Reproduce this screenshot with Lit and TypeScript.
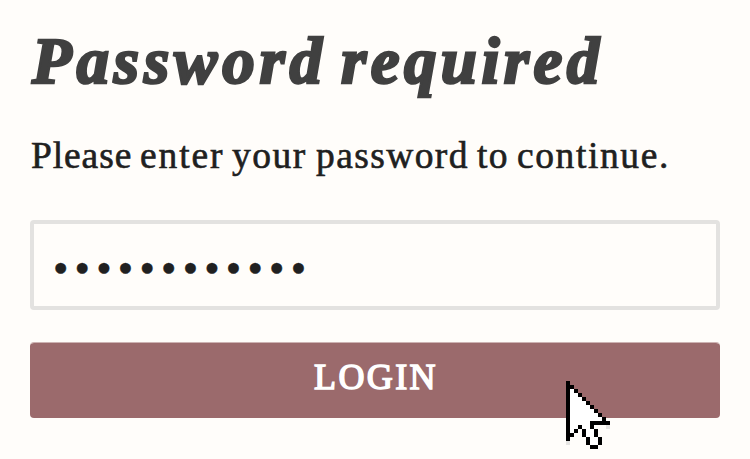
import { LitElement, html, css, svg } from "lit";
import { customElement } from "lit/decorators.js";
import { styleMap } from "lit/directives/style-map.js";

interface Word { text: string; advance: number; spacing: number; }

const TITLE: Word[] = [
  { text: "Password", advance: 309, spacing: 4.8 },
  { text: "required", advance: 270, spacing: 4.4 },
];

const MESSAGE: Word[] = [
  { text: "Please", advance: 109, spacing: 0.9 },
  { text: "enter", advance: 92, spacing: 1.9 },
  { text: "your", advance: 84, spacing: 1.5 },
  { text: "password", advance: 161, spacing: 1.4 },
  { text: "to", advance: 40, spacing: 1.4 },
  { text: "continue.", advance: 160, spacing: 1.6 },
];

const words = (list: Word[]) => list.map(
  (w) => html`<span class="word" style=${styleMap({ width: `${w.advance}px`, letterSpacing: `${w.spacing}px` })}>${w.text}</span> `
);

// Pointer bitmap: # outline, o fill, - soft shadow
const POINTER = [
  "#          ",
  "##         ",
  "#o#        ",
  "#oo#       ",
  "#ooo#      ",
  "#oooo#     ",
  "#ooooo#    ",
  "#oooooo#   ",
  "#ooooooo#  ",
  "#oooooooo# ",
  "#ooooo#####",
  "#oo#oo#   -",
  "#o# #oo#   ",
  "##  #oo#   ",
  "#    #oo#  ",
  "-    #oo#  ",
  "      ##   ",
];
const INK: Record<string, string> = { "#": "#000", o: "#fff", "-": "#e6e5e3" };

@customElement("app-root")
export class AppRoot extends LitElement {
  static styles = css`
    :host {
      display: block;
      position: relative;
      box-sizing: border-box;
      height: 459px;
      padding: 19px 30px 0;
      overflow: hidden;
      background: #fffdfa;
      color: #202020;
      font-family: "Liberation Serif", serif;
    }
    form { display: flex; flex-direction: column; }
    h1, p { display: flex; margin: 0; white-space: nowrap; }
    .word { flex: none; }
    h1 {
      height: 84px;
      padding-left: 2px;
      font: italic bold 65px/84px "Liberation Serif", serif;
      color: #404040;
      -webkit-text-stroke: 2.6px #404040;
    }
    p {
      height: 50px;
      margin-top: 28px;
      padding-left: 1px;
      font-size: 37.5px;
      line-height: 50px;
      -webkit-text-stroke: 0.6px #202020;
    }
    input {
      box-sizing: border-box;
      width: 100%;
      height: 90px;
      margin: 39px 0 0;
      padding: 6px 19px 0;
      border: 4px solid #e3e2e0;
      border-radius: 4px;
      outline: none;
      background: transparent;
      color: #202020;
      font: 44px "Liberation Serif", serif;
      letter-spacing: 6.2px;
      -webkit-text-stroke: 0.4px #202020;
    }
    button {
      height: 76px;
      margin: 32px 0 0;
      padding: 0 0 7px 2px;
      border: 0;
      border-top: 1px solid #cdb3b2;
      border-radius: 4px;
      background: #9b6a6c;
      background-clip: padding-box;
      color: #fff;
      font: 36px "Liberation Serif", serif;
      letter-spacing: 2.4px;
      -webkit-text-stroke: 1.5px #fff;
    }
    .pointer {
      position: absolute;
      left: 566px;
      top: 381px;
      pointer-events: none;
    }
  `;

  render() {
    return html`
      <form @submit=${(e: Event) => e.preventDefault()}>
        <h1>${words(TITLE)}</h1>
        <p>${words(MESSAGE)}</p>
        <input type="password" aria-label="Password" .value=${"abcdefghijkl"} />
        <button type="submit">LOGIN</button>
      </form>
      <svg class="pointer" width="44" height="68" viewBox="0 0 11 17" shape-rendering="crispEdges" aria-hidden="true">
        ${POINTER.flatMap((row, y) => [...row].map((c, x) =>
          INK[c] ? svg`<rect x=${x} y=${y} width="1" height="1" fill=${INK[c]}></rect>` : null))}
      </svg>
    `;
  }
}
